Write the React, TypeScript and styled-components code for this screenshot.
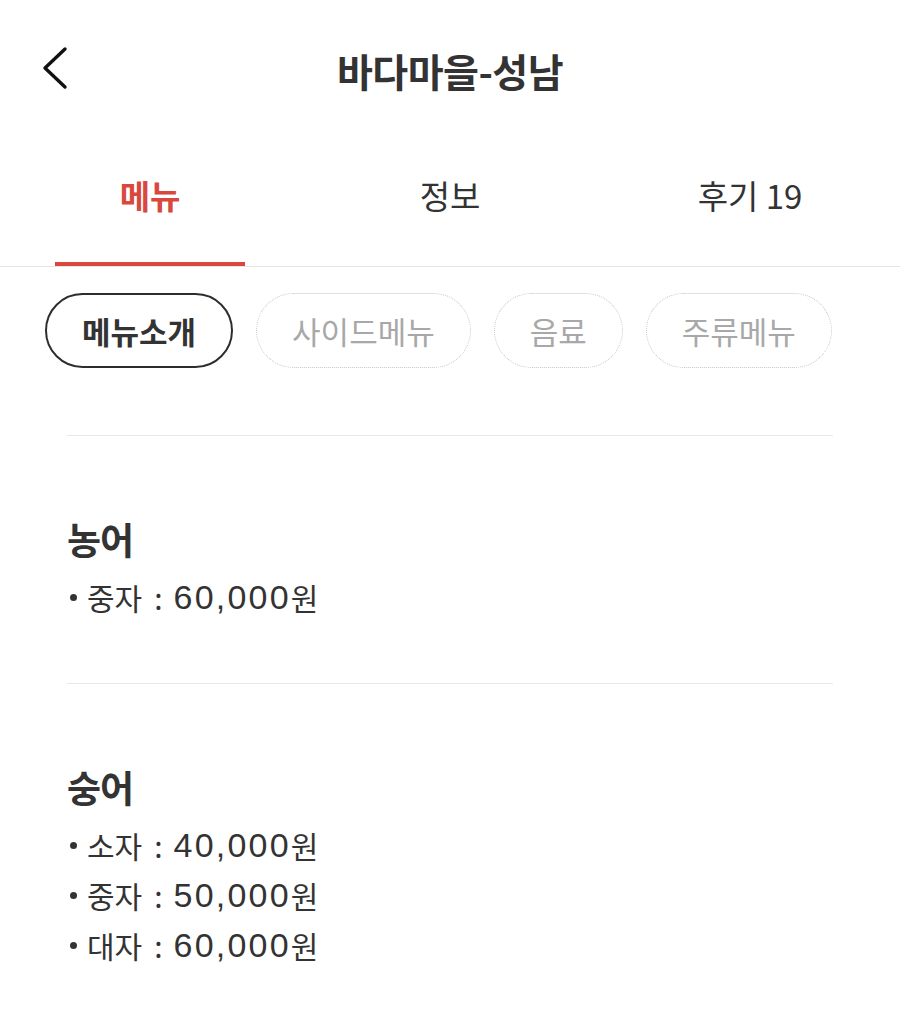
import React from 'react';
import styled, { createGlobalStyle } from 'styled-components';

const GlobalStyle = createGlobalStyle`
  html, body {
    margin: 0;
    padding: 0;
    background: #ffffff;
  }
  body {
    font-family: "Noto Sans CJK KR", "Noto Sans", sans-serif;
    color: #333333;
  }
`;

type MenuItem = {
  size: string;
  price: string;
};

type MenuGroup = {
  name: string;
  items: MenuItem[];
};

const categories = ['메뉴소개', '사이드메뉴', '음료', '주류메뉴'];
const tabs = ['메뉴', '정보', '후기 19'];

const groups: MenuGroup[] = [
  { name: '농어', items: [{ size: '중자', price: '60,000' }] },
  {
    name: '숭어',
    items: [
      { size: '소자', price: '40,000' },
      { size: '중자', price: '50,000' },
      { size: '대자', price: '60,000' },
    ],
  },
];

const Page = styled.div`
  width: 900px;
  min-height: 1022px;
  background: #ffffff;
`;

const Header = styled.header`
  height: 140px;
  display: grid;
  grid-template-columns: 110px 1fr 110px;
  align-items: center;
`;

const BackButton = styled.button`
  display: flex;
  align-items: center;
  justify-content: flex-start;
  padding: 0 0 4px 41px;
  border: none;
  background: none;
  height: 60px;
  cursor: pointer;
`;

const Title = styled.h1`
  margin: 0;
  text-align: center;
  font-size: 39px;
  font-weight: 700;
  color: #333333;
  letter-spacing: -0.5px;
`;

const TabBar = styled.nav`
  display: grid;
  grid-template-columns: repeat(3, 1fr);
  border-bottom: 1px solid #e4e4e4;
`;

const Tab = styled.div`
  height: 126px;
  display: flex;
  flex-direction: column;
  align-items: center;
`;

const TabLabel = styled.span<{ $active: boolean }>`
  flex: 1;
  display: flex;
  align-items: center;
  padding-bottom: 12px;
  font-size: 33px;
  font-weight: ${(p) => (p.$active ? 700 : 400)};
  color: ${(p) => (p.$active ? '#d9483f' : '#333333')};
`;

const TabIndicator = styled.div<{ $active: boolean }>`
  width: 190px;
  height: 4px;
  background: ${(p) => (p.$active ? '#d9483f' : 'transparent')};
`;

const ChipRow = styled.div`
  display: flex;
  gap: 23px;
  padding: 26px 45px 0;
`;

const Chip = styled.div<{ $active: boolean }>`
  height: 75px;
  box-sizing: border-box;
  padding: 0 35px;
  display: flex;
  align-items: center;
  border-radius: 38px;
  border: ${(p) => (p.$active ? '2px solid #2d2d2d' : '1.5px dotted #c4c4c4')};
  font-size: 31px;
  font-weight: ${(p) => (p.$active ? 700 : 400)};
  color: ${(p) => (p.$active ? '#333333' : '#a8a8a8')};
`;

const MenuList = styled.div`
  padding: 67px 67px 0;
`;

const Group = styled.section`
  border-top: 1px solid #e8e8e8;
  padding: 78px 0 61px;
`;

const GroupName = styled.h2`
  margin: 0 0 8px;
  font-size: 37px;
  letter-spacing: -1px;
  line-height: 50px;
  font-weight: 700;
  color: #333333;
`;

const Item = styled.div`
  font-size: 30px;
  line-height: 50px;
  color: #333333;
  display: flex;
  align-items: center;
`;

const Bullet = styled.span`
  display: inline-block;
  width: 7px;
  height: 7px;
  border-radius: 50%;
  background: #333333;
  margin: 0 10px 0 3px;
`;

const Colon = styled.span`
  margin: 0 11px 0 12px;
`;

const Price = styled.span`
  font-family: "Liberation Sans", "Noto Sans", sans-serif;
  font-size: 34px;
  letter-spacing: 2.2px;
`;

const ChevronLeft = () => (
  <svg width="28" height="44" viewBox="0 0 28 44" fill="none">
    <path d="M24 3 L4 22 L24 41" stroke="#111111" strokeWidth="3.4" strokeLinecap="round" strokeLinejoin="round" />
  </svg>
);

export default function App() {
  return (
    <Page>
      <GlobalStyle />
      <Header>
        <BackButton aria-label="back">
          <ChevronLeft />
        </BackButton>
        <Title>바다마을-성남</Title>
        <div />
      </Header>
      <TabBar>
        {tabs.map((t, i) => (
          <Tab key={t}>
            <TabLabel $active={i === 0}>{t}</TabLabel>
            <TabIndicator $active={i === 0} />
          </Tab>
        ))}
      </TabBar>
      <ChipRow>
        {categories.map((c, i) => (
          <Chip key={c} $active={i === 0}>
            {c}
          </Chip>
        ))}
      </ChipRow>
      <MenuList>
        {groups.map((g) => (
          <Group key={g.name}>
            <GroupName>{g.name}</GroupName>
            {g.items.map((it) => (
              <Item key={it.size}>
                <Bullet />
                {it.size}
                <Colon>:</Colon>
                <Price>{it.price}</Price>원
              </Item>
            ))}
          </Group>
        ))}
      </MenuList>
    </Page>
  );
}
